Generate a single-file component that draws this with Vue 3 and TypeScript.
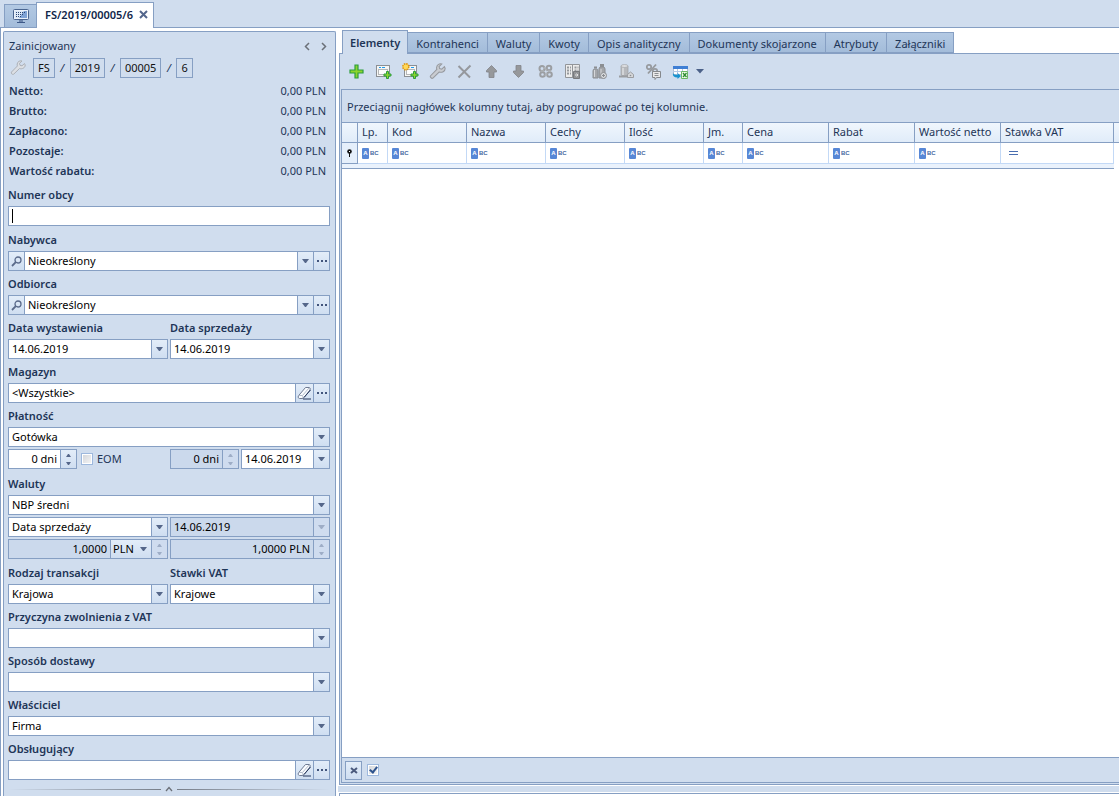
<script setup lang="ts">
import { ref } from 'vue'

interface Column { title: string; width: number; filter: 'abc' | 'eq' }

const totals = [
  { label: 'Netto:', value: '0,00 PLN' },
  { label: 'Brutto:', value: '0,00 PLN' },
  { label: 'Zapłacono:', value: '0,00 PLN' },
  { label: 'Pozostaje:', value: '0,00 PLN' },
  { label: 'Wartość rabatu:', value: '0,00 PLN' },
]

const tabs = ['Elementy', 'Kontrahenci', 'Waluty', 'Kwoty', 'Opis analityczny', 'Dokumenty skojarzone', 'Atrybuty', 'Załączniki']
const activeTab = ref('Elementy')

const columns: Column[] = [
  { title: 'Lp.', width: 30, filter: 'abc' },
  { title: 'Kod', width: 79, filter: 'abc' },
  { title: 'Nazwa', width: 79, filter: 'abc' },
  { title: 'Cechy', width: 79, filter: 'abc' },
  { title: 'Ilość', width: 79, filter: 'abc' },
  { title: 'Jm.', width: 39, filter: 'abc' },
  { title: 'Cena', width: 86, filter: 'abc' },
  { title: 'Rabat', width: 86, filter: 'abc' },
  { title: 'Wartość netto', width: 86, filter: 'abc' },
  { title: 'Stawka VAT', width: 113, filter: 'eq' },
]

const contractors = [
  { id: 'nabywca', label: 'Nabywca', value: 'Nieokreślony' },
  { id: 'odbiorca', label: 'Odbiorca', value: 'Nieokreślony' },
]

const singles = [
  { id: 'przyczyna', label: 'Przyczyna zwolnienia z VAT', value: '' },
  { id: 'dostawa', label: 'Sposób dostawy', value: '' },
  { id: 'wlasciciel', label: 'Właściciel', value: 'Firma' },
]

const issueDate = ref('14.06.2019')
const saleDate = ref('14.06.2019')
const dueDate = ref('14.06.2019')
const eom = ref(false)
const filterOn = ref(true)
</script>

<template>
  <div class="app">
    <nav class="doc-tabs">
      <button class="doc-tab home" type="button" aria-label="Pulpit">
        <svg width="16" height="15" viewBox="0 0 16 15">
          <rect x="0.5" y="0.5" width="15" height="10" rx="1" fill="#e9f1fb" stroke="#4a6590" />
          <rect x="2" y="2" width="12" height="7" fill="#7fa3d6" />
          <path d="M2 2h9L6 9H2z" fill="#dce9f8" />
          <path d="M3 3.500h9M3 5.500h7M3 7.500h5" stroke="#2c4675" stroke-width="1" stroke-dasharray="1 1" />
          <rect x="6" y="11" width="4" height="2" fill="#6d86ad" />
          <rect x="4" y="13" width="8" height="1" fill="#3c5888" />
        </svg>
      </button>
      <div class="doc-tab current">
        <span>FS/2019/00005/6</span>
        <button class="close" type="button" aria-label="Zamknij">
          <svg width="9" height="9" viewBox="0 0 9 9"><path d="M1 1l7 7M8 1L1 8" stroke="#53668c" stroke-width="2" /></svg>
        </button>
      </div>
    </nav>

    <div class="workspace">
      <aside class="side">
        <div class="status">
          <span>Zainicjowany</span>
          <span class="pager">
            <button type="button" aria-label="Poprzedni"><svg width="6" height="9" viewBox="0 0 6 9"><path d="M5 1L1.500 4.500L5 8" fill="none" stroke="#6b7078" stroke-width="1.500" /></svg></button>
            <button type="button" aria-label="Następny"><svg width="6" height="9" viewBox="0 0 6 9"><path d="M1 1l3.500 3.500L1 8" fill="none" stroke="#6b7078" stroke-width="1.500" /></svg></button>
          </span>
        </div>
        <div class="number">
          <button class="wrench" type="button" aria-label="Edytuj numer">
            <svg width="16" height="16" viewBox="0 0 16 16"><path d="M14.500 3.500l-2.500 2.300-2-.5-.5-2L12 1C10 .3 7.500 1.500 7.200 4c-.1.800 0 1.500.2 2L1.500 12c-.9 1 .9 3.200 2.200 2.200L9.500 8.500c2.500.9 5.800-.6 5.700-3.500z" fill="#dcdfe4" stroke="#acb0b7" /></svg>
          </button>
          <span class="part">FS</span><i>/</i>
          <span class="part">2019</span><i>/</i>
          <span class="part">00005</span><i>/</i>
          <span class="part">6</span>
        </div>
        <dl class="totals">
          <div v-for="t in totals" :key="t.label"><dt>{{ t.label }}</dt><dd>{{ t.value }}</dd></div>
        </dl>

        <form class="form" @submit.prevent>
          <div class="field first">
            <label for="obcy">Numer obcy</label>
            <div class="box"><input id="obcy" type="text" /><span class="caret"></span></div>
          </div>

          <div v-for="c in contractors" :key="c.id" class="field">
            <label :for="c.id">{{ c.label }}</label>
            <div class="box">
              <button class="cell left" type="button" aria-label="Szukaj">
                <svg width="11" height="11" viewBox="0 0 11 11"><circle cx="7" cy="4" r="3" fill="none" stroke="#5a6a8a" stroke-width="1.300" /><path d="M4.800 6.200L1 10" stroke="#5a6a8a" stroke-width="1.800" /></svg>
              </button>
              <select :id="c.id"><option>{{ c.value }}</option></select>
              <span class="cell"><i class="tri"></i></span>
              <button class="cell" type="button" aria-label="Więcej"><i class="dots"></i></button>
            </div>
          </div>

          <div class="pair">
            <div class="field">
              <label for="wyst">Data wystawienia</label>
              <div class="box"><input id="wyst" v-model="issueDate" type="text" /><button class="cell" type="button" aria-label="Kalendarz"><i class="tri"></i></button></div>
            </div>
            <div class="field">
              <label for="sprz">Data sprzedaży</label>
              <div class="box"><input id="sprz" v-model="saleDate" type="text" /><button class="cell" type="button" aria-label="Kalendarz"><i class="tri"></i></button></div>
            </div>
          </div>

          <div class="field">
            <label for="magazyn">Magazyn</label>
            <div class="box">
              <input id="magazyn" type="text" value="<Wszystkie>" />
              <button class="cell wide" type="button" aria-label="Wyczyść">
                <svg width="15" height="14" viewBox="0 0 15 14"><path d="M8.500 1.500h3.500q2 .5 1 2.500L7 11.500q-.7 1-2 1H2.500q-2-.5-1.200-2.500z" fill="#fafcff" stroke="#6f7b93" /><path d="M1.500 9.500h3.500q1.500.4 1 2.500M5.500 9.500L12 2" fill="none" stroke="#b4bdcc" /><path d="M7 11.500L13.500 4M6 13h8" stroke="#26375d" /></svg>
              </button>
              <button class="cell" type="button" aria-label="Więcej"><i class="dots"></i></button>
            </div>
          </div>

          <div class="field">
            <label for="platnosc">Płatność</label>
            <div class="box"><select id="platnosc"><option>Gotówka</option></select><span class="cell"><i class="tri"></i></span></div>
          </div>
          <div class="pair">
            <div class="inline">
              <div class="box days">
                <input class="num" type="text" value="0 dni" aria-label="Termin" />
                <button class="cell spin" type="button" aria-label="Zmień termin"><i></i><i></i></button>
              </div>
              <label class="check"><input v-model="eom" type="checkbox" /><span>EOM</span></label>
            </div>
            <div class="inline tight">
              <div class="box days off">
                <input class="num" type="text" value="0 dni" aria-label="Dni" disabled />
                <button class="cell spin" type="button" aria-label="Zmień dni" disabled><i></i><i></i></button>
              </div>
              <div class="box grow"><input v-model="dueDate" type="text" aria-label="Termin płatności" /><button class="cell" type="button" aria-label="Kalendarz"><i class="tri"></i></button></div>
            </div>
          </div>

          <div class="field spaced">
            <label for="waluty">Waluty</label>
            <div class="box"><select id="waluty"><option>NBP średni</option></select><span class="cell"><i class="tri"></i></span></div>
          </div>
          <div class="pair">
            <div class="box"><select aria-label="Rodzaj daty kursu"><option>Data sprzedaży</option></select><span class="cell"><i class="tri"></i></span></div>
            <div class="box off"><input type="text" value="14.06.2019" aria-label="Data kursu" disabled /><button class="cell" type="button" aria-label="Kalendarz" disabled><i class="tri"></i></button></div>
          </div>
          <div class="pair">
            <div class="box off">
              <input class="num" type="text" value="1,0000" aria-label="Kurs" disabled />
              <span class="currency"><select aria-label="Waluta"><option>PLN</option></select><i class="tri"></i></span>
              <button class="cell spin" type="button" aria-label="Zmień kurs" disabled><i></i><i></i></button>
            </div>
            <div class="box off">
              <input class="num" type="text" value="1,0000 PLN" aria-label="Wartość kursu" disabled />
              <button class="cell spin" type="button" aria-label="Zmień wartość" disabled><i></i><i></i></button>
            </div>
          </div>

          <div class="pair after">
            <div class="field">
              <label for="rodzaj">Rodzaj transakcji</label>
              <div class="box"><select id="rodzaj"><option>Krajowa</option></select><span class="cell"><i class="tri"></i></span></div>
            </div>
            <div class="field">
              <label for="stawki">Stawki VAT</label>
              <div class="box"><select id="stawki"><option>Krajowe</option></select><span class="cell"><i class="tri"></i></span></div>
            </div>
          </div>

          <div v-for="s in singles" :key="s.id" class="field">
            <label :for="s.id">{{ s.label }}</label>
            <div class="box"><select :id="s.id"><option>{{ s.value }}</option></select><span class="cell"><i class="tri"></i></span></div>
          </div>

          <div class="field">
            <label for="obslugujacy">Obsługujący</label>
            <div class="box">
              <input id="obslugujacy" type="text" />
              <button class="cell wide" type="button" aria-label="Wyczyść">
                <svg width="15" height="14" viewBox="0 0 15 14"><path d="M8.500 1.500h3.500q2 .5 1 2.500L7 11.500q-.7 1-2 1H2.500q-2-.5-1.200-2.500z" fill="#fafcff" stroke="#6f7b93" /><path d="M1.500 9.500h3.500q1.500.4 1 2.500M5.500 9.500L12 2" fill="none" stroke="#b4bdcc" /><path d="M7 11.500L13.500 4M6 13h8" stroke="#26375d" /></svg>
              </button>
              <button class="cell" type="button" aria-label="Więcej"><i class="dots"></i></button>
            </div>
          </div>
        </form>
        <button class="fold" type="button" aria-label="Zwiń">
          <i></i>
          <svg width="8" height="6" viewBox="0 0 8 6"><path d="M1 5l3-3.500L7 5" fill="none" stroke="#6b7078" stroke-width="1.300" /></svg>
          <i></i>
        </button>
      </aside>

      <main class="main">
        <div class="tabs" role="tablist">
          <button v-for="t in tabs" :key="t" type="button" role="tab" class="tab" :class="{ active: t === activeTab }" @click="activeTab = t">{{ t }}</button>
        </div>
        <section class="panel">
          <div class="toolbar">
            <button type="button" aria-label="Dodaj"><svg width="17" height="17" viewBox="0 0 17 17"><path d="M7 2h3v5h5v3h-5v5H7v-5H2V7h5z" fill="#8ed52c" stroke="#2d9d3c" stroke-width="1.200" /></svg></button>
            <button type="button" aria-label="Dodaj w oknie">
              <svg width="17" height="17" viewBox="0 0 17 17"><rect x="1.500" y="2.500" width="13" height="11" fill="#f6f6f4" stroke="#8b8f94" /><path d="M4 4.500h2M7 4.500h3" stroke="#1d9bf0" /><rect x="3.500" y="6.500" width="9" height="5" fill="#fdfdfd" stroke="#b5b7b8" /><path d="M11.500 8.500h2v2.500H16v2h-2.500v2.500h-2V13H9v-2h2.500z" fill="#8ed52c" stroke="#2d9d3c" /></svg>
            </button>
            <button type="button" aria-label="Nowy element">
              <svg width="17" height="17" viewBox="0 0 17 17"><rect x="2.500" y="2.500" width="12" height="11" fill="#f6f6f4" stroke="#8b8f94" /><path d="M9 4.500h3" stroke="#1d9bf0" /><rect x="4.500" y="6.500" width="8" height="5" fill="#fdfdfd" stroke="#b5b7b8" /><circle cx="3.800" cy="3.800" r="3" fill="#ffd95a" stroke="#dc930d" stroke-width="1.500" stroke-dasharray="1.500 0.860" /><path d="M11.500 8.500h2v2.500H16v2h-2.500v2.500h-2V13H9v-2h2.500z" fill="#8ed52c" stroke="#2d9d3c" /></svg>
            </button>
            <button type="button" aria-label="Edytuj"><svg width="17" height="17" viewBox="0 0 16 16"><path d="M14.500 3.500l-2.500 2.300-2-.5-.5-2L12 1C10 .3 7.500 1.500 7.200 4c-.1.800 0 1.500.2 2L1.500 12c-.9 1 .9 3.200 2.200 2.200L9.500 8.500c2.500.9 5.800-.6 5.700-3.500z" fill="#c9ccd1" stroke="#96999e" /></svg></button>
            <button type="button" aria-label="Usuń"><svg width="17" height="17" viewBox="0 0 17 17"><path d="M2.500 3L14 14.500M14.500 2.500L2.500 14.500" stroke="#95989d" stroke-width="2" /></svg></button>
            <button type="button" aria-label="W górę"><svg width="17" height="17" viewBox="0 0 17 17"><path d="M8.500 2.500l5 5v1.500H11v5.500H6V9H3.500V7.500z" fill="#96989b" stroke="#818388" stroke-width="0.800" /></svg></button>
            <button type="button" aria-label="W dół"><svg width="17" height="17" viewBox="0 0 17 17"><path d="M8.500 14.500l5-5V8H11V2.500H6V8H3.500v1.500z" fill="#96989b" stroke="#818388" stroke-width="0.800" /></svg></button>
            <button type="button" aria-label="Powiąż">
              <svg width="17" height="17" viewBox="0 0 17 17" fill="none" stroke="#9b9ea2" stroke-width="2"><circle cx="5" cy="5.500" r="2.500" /><circle cx="12" cy="5" r="2.300" /><circle cx="5.500" cy="11.500" r="2.300" /><circle cx="12.500" cy="11.500" r="2.300" /><path d="M7 4l3 4M4 8h3M10 10l-2 3M11 8h3" stroke="#afb2b6" stroke-width="1.500" /></svg>
            </button>
            <button type="button" aria-label="Cennik">
              <svg width="17" height="17" viewBox="0 0 17 17"><path d="M1.500 1.500h14v13h-14z" fill="#ececec" stroke="#929599" /><path d="M8 2h1v12H8z" fill="#929599" /><path d="M3 4.500h4M3 7.500h4M3 10.500h4M10.500 4.500h4M10.500 7.500h4" stroke="#96999d" stroke-width="2" stroke-dasharray="2 1" /><path d="M9.500 8.500h6v7h-6z" fill="#929497" stroke="#77797d" /><path d="M11 12h2.500M12.500 10.500L14 12l-1.500 1.500" fill="none" stroke="#e0e0e0" /></svg>
            </button>
            <button type="button" aria-label="Zestaw">
              <svg width="17" height="17" viewBox="0 0 17 17"><path d="M2 8q0-2 1.500-2h2Q7 6 7 8v7H2zM8 6q0-2 2-2h2q2 0 2 2v9H8z" fill="#a4a6aa" stroke="#8b8e92" /><path d="M3 3.500h3v2H3zM9 1h4v3H9z" fill="#8b8e92" /><path d="M3.500 7v7M10 6v8" stroke="#d5d7da" /><circle cx="12.500" cy="12.500" r="3" fill="#d9dbde" stroke="#8b8e92" /><path d="M12.500 11v3M11 12.500h3" stroke="#8b8e92" /></svg>
            </button>
            <button type="button" aria-label="Zasoby">
              <svg width="17" height="17" viewBox="0 0 17 17"><path d="M3 3v9q3.500 2 7 0V3z" fill="#b7b9bd" stroke="#9b9da1" stroke-width="0.700" /><path d="M5 4v8" stroke="#d3d5d8" stroke-width="2" /><ellipse cx="6.500" cy="3" rx="3.500" ry="1.500" fill="#dcdde0" stroke="#a4a6aa" stroke-width="0.700" /><path d="M1 13.500h11" stroke="#9b9da1" stroke-width="2" /><path d="M9.500 14.500v-3l3-2.500 3 2.500v3z" fill="#d5d7da" stroke="#9b9da1" /><circle cx="12.500" cy="12.500" r="0.800" fill="#8b8e92" /></svg>
            </button>
            <button type="button" aria-label="Rabat">
              <svg width="17" height="17" viewBox="0 0 17 17"><circle cx="4" cy="4" r="2.200" fill="none" stroke="#96999d" stroke-width="1.700" /><circle cx="10" cy="8" r="2.200" fill="none" stroke="#96999d" stroke-width="1.700" /><path d="M11 1.500L3 10.500" stroke="#96999d" stroke-width="1.800" /><path d="M7.500 8.500h8v6h-4l-1.500 2v-2H7.500z" fill="#e9e9ea" stroke="#85888c" /><path d="M9.500 10.500h4M9.500 12.500h4" stroke="#8b8e92" /></svg>
            </button>
            <button type="button" aria-label="Eksport">
              <svg width="17" height="17" viewBox="0 0 17 17"><path d="M1.500 3.500h14v8h-14z" fill="#fff" stroke="#b1bdd2" /><path d="M1 3h15v3H1z" fill="#3f7fd4" /><path d="M5.500 6v6M10.500 6v6M1 8.500h15" stroke="#b4c7e4" /><path d="M1 9.500q0 2.500 4.500 2.500V10L9 13l-3.500 3v-1.500Q0 14.500 1 9.500z" fill="#1a93cf" /><path d="M9.500 8.500h6v7h-6z" fill="#effbe9" stroke="#6ab766" /><path d="M11 10l3.500 4M14.500 10L11 14" stroke="#2c8b31" stroke-width="1.300" /></svg>
            </button>
            <button type="button" class="more" aria-label="Więcej opcji"><svg width="8" height="5" viewBox="0 0 8 5"><path d="M0 0h8L4 4.500z" fill="#4b6189" /></svg></button>
          </div>

          <div class="grid">
            <div class="group-hint">Przeciągnij nagłówek kolumny tutaj, aby pogrupować po tej kolumnie.</div>
            <table class="table">
              <colgroup>
                <col class="marker-col" />
                <col v-for="c in columns" :key="c.title" :style="{ width: c.width + 'px' }" />
                <col />
              </colgroup>
              <thead>
                <tr><th></th><th v-for="c in columns" :key="c.title" scope="col">{{ c.title }}</th><th></th></tr>
              </thead>
              <tbody>
                <tr class="filters">
                  <td class="marker"><svg width="7" height="8" viewBox="0 0 7 8"><circle cx="3.500" cy="2.500" r="2.300" fill="#111" /><rect x="3" y="2" width="1" height="1" fill="#fff" /><path d="M3.500 4v4" stroke="#111" /></svg></td>
                  <td v-for="c in columns" :key="c.title">
                    <span v-if="c.filter === 'abc'" class="abc"><b>A</b><span>BC</span></span>
                    <i v-else class="equals"></i>
                  </td>
                  <td class="rest"></td>
                </tr>
                <tr class="sheet"><td colspan="11"></td><td class="rest"></td></tr>
              </tbody>
            </table>
            <div class="empty"></div>
            <footer class="foot">
              <button type="button" aria-label="Usuń filtr"><svg width="8" height="7" viewBox="0 0 8 7"><path d="M1 1l6 5M7 1L1 6" stroke="#4b5a7d" stroke-width="2" /></svg></button>
              <label class="check"><input v-model="filterOn" type="checkbox" aria-label="Filtr aktywny" /></label>
            </footer>
          </div>
        </section>
        <div class="splitter"></div>
        <div class="lower"></div>
      </main>
    </div>
  </div>
</template>

<style>
html, body { margin: 0; overflow: hidden; }
</style>

<style scoped>
.app {
  --bg: #d0ddee;
  --line: #869fc3;
  --ink: #1e3557;
  display: flex;
  flex-direction: column;
  height: 100vh;
  background: var(--bg);
  color: var(--ink);
  font: 11px/16px "Noto Sans", "Open Sans", sans-serif;
}
.app * { box-sizing: border-box; }
button, input, select { font: inherit; color: inherit; margin: 0; padding: 0; border: 0; background: none; border-radius: 0; outline: 0; }
button { display: flex; align-items: center; justify-content: center; }
svg { display: block; flex: none; }

.doc-tabs { display: flex; align-items: flex-end; flex: none; height: 28px; padding-left: 4px; border-bottom: 1px solid var(--line); }
.doc-tab { border: 1px solid var(--line); border-bottom: 0; }
.home { width: 33px; height: 23px; background: linear-gradient(#b3c9e3, #a3bcda); }
.current { display: flex; align-items: center; gap: 6px; height: 26px; margin: 0 0 -1px -1px; padding: 0 5px 2px 8px; background: #fff; color: #10264a; font-weight: 600; }

.workspace { display: flex; flex: 1; min-height: 0; background: #fff; border-left: 1px solid var(--line); padding: 3px 0 0 2px; }
.side { flex: none; width: 333px; border: 1px solid var(--line); border-bottom: 0; border-radius: 2px 2px 0 0; background: var(--bg); padding: 4px 5px 0 4px; overflow: hidden; }
.status { display: flex; justify-content: space-between; align-items: center; height: 20px; padding-left: 1px; }
.pager { display: flex; gap: 11px; padding-right: 3px; }
.number { display: flex; align-items: center; height: 24px; }
.wrench { width: 20px; height: 20px; margin-right: 5px; }
.part { border: 1px solid var(--line); height: 20px; line-height: 18px; padding: 0 4px; color: #111; }
.number i { width: 15px; text-align: center; }
.totals { margin: 0; padding: 1px 4px 0 1px; }
.totals div { display: flex; justify-content: space-between; height: 20px; line-height: 20px; }
.totals dt { font-weight: 600; }
.totals dd { margin: 0; }

.form { display: flex; flex-direction: column; gap: 2px; padding-top: 3px; }
.field > label { display: block; height: 22px; line-height: 22px; font-weight: 600; }
.first { margin-bottom: 1px; }
.spaced { margin-top: 2px; }
.after { margin-top: 1px; }
.pair { display: grid; grid-template-columns: 1fr 1fr; gap: 2px; }
.box { position: relative; display: flex; height: 20px; border: 1px solid var(--line); background: #fff; color: #000; }
.box input, .box > select { flex: 1; width: 0; min-width: 0; height: 18px; padding: 0 3px; appearance: none; }
.box input { padding-bottom: 2px; }
.box .num { text-align: right; }
.caret { position: absolute; left: 3px; top: 2px; width: 1px; height: 14px; background: #000; }
.cell { display: flex; align-items: center; justify-content: center; flex: none; width: 16px; border-left: 1px solid var(--line); background: linear-gradient(#e3edf9, #cfdef1); }
.cell.wide { width: 18px; }
.cell.left { border-left: 0; border-right: 1px solid var(--line); }
.tri { width: 7px; border: solid transparent; border-width: 4px 3px 0; border-top-color: #55678a; }
.dots { width: 2px; height: 2px; background: #42557c; box-shadow: -4px 0 #42557c, 4px 0 #42557c; }
.spin { flex-direction: column; gap: 5px; }
.spin i { width: 5px; border: solid transparent; border-width: 0 2px 3px; border-bottom-color: #55678a; }
.spin i + i { border-width: 3px 2px 0; border-top-color: #55678a; }
.off { background: #cbd9ec; }
.off > .cell { background: #cfdcef; }
.off > .cell i { opacity: .4; }
.box input:disabled { color: #000; opacity: 1; }
.currency { display: flex; align-items: center; width: 41px; padding-right: 4px; border-left: 1px solid var(--line); background: linear-gradient(#e3edf9, #cfdef1); }
.currency select { flex: 1; width: 0; padding-left: 2px; appearance: none; }
.inline { display: flex; align-items: center; gap: 4px; }
.tight { gap: 2px; }
.days { width: 69px; }
.grow { flex: 1; }
.check { display: flex; align-items: center; gap: 4px; }
.check input { position: relative; width: 12px; height: 12px; appearance: none; border: 1px solid #9db8dd; background: linear-gradient(135deg, #d0d3d8, #f7f7f7); box-shadow: inset 0 0 0 1px #fff; }
.check input:checked::after { content: ""; position: absolute; left: 3px; top: 0; width: 5px; height: 8px; border: solid #2f548d; border-width: 0 2px 2px 0; box-sizing: border-box; transform: rotate(38deg); }
.fold { width: 100%; height: 12px; margin-top: 3px; gap: 4px; }
.fold i { flex: 1; height: 1px; background: linear-gradient(90deg, var(--bg), #777e89); }
.fold i:last-child { background: linear-gradient(270deg, var(--bg), #777e89); }

.main { display: flex; flex-direction: column; flex: 1; min-width: 0; padding-left: 2px; }
.tabs { position: relative; z-index: 1; display: flex; align-items: flex-end; height: 22px; margin: 0 0 0 4px; }
.tab { height: 21px; margin-right: -1px; padding: 2px 8px 0; border: 1px solid var(--line); background: linear-gradient(#b3c9e3, #a3bcda); white-space: nowrap; }
.tab.active { height: 24px; margin-bottom: -1px; padding: 0 7px; background: var(--bg); border-bottom: 0; font-weight: 600; }
.panel { display: flex; flex-direction: column; flex: 1; min-height: 0; margin-left: 1px; border: 1px solid var(--line); border-right: 0; background: var(--bg); padding: 0 0 1px 1px; }
.toolbar { display: flex; align-items: center; flex: none; height: 35px; padding-left: 2px; }
.toolbar button { width: 27px; height: 27px; }
.toolbar .more { width: 12px; }
.grid { display: flex; flex-direction: column; flex: 1; min-height: 0; border: 1px solid var(--line); border-right: 0; }
.group-hint { flex: none; height: 32px; line-height: 34px; padding-left: 5px; white-space: nowrap; overflow: hidden; }
.table { width: 100%; table-layout: fixed; border-collapse: separate; border-spacing: 0; background: #fff; }
.marker-col { width: 16px; }
th { height: 21px; padding: 0 0 2px 4px; border: solid var(--line); border-width: 1px 1px 1px 0; background: linear-gradient(#f0f6fd, #e0ecf9); font-weight: 400; text-align: left; white-space: nowrap; overflow: hidden; }
th:last-child { border-right: 0; }
.filters td { height: 21px; padding: 0 0 0 4px; border-right: 1px solid #c3d9f6; border-bottom: 1px solid #c3d9f6; }
.filters .marker { padding-left: 4px; background: #e5effb; border-color: var(--line); }
.sheet td { height: 5px; padding: 0; background: #eaf2fc; border-bottom: 1px solid var(--line); }
.filters .rest, .sheet .rest { background: #fff; border: 0; }
.abc { display: flex; align-items: center; gap: 1px; font: 700 6px/11px "Liberation Sans", sans-serif; color: #44689f; }
.abc b { width: 7px; height: 11px; background: #5787d6; color: #fff; text-align: center; border-radius: 1px; }
.equals { display: block; width: 9px; height: 4px; margin-left: 4px; border: solid #4a6eb0; border-width: 1px 0; }
.empty { flex: 1; background: #fff; }
.foot { display: flex; align-items: center; gap: 5px; flex: none; height: 25px; padding-left: 3px; border-top: 1px solid var(--line); }
.foot button { width: 17px; height: 19px; border: 1px solid var(--line); background: linear-gradient(#e3edf9, #cfdef1); }
.splitter { flex: none; height: 6px; margin-top: 1px; background: var(--bg); }
.lower { flex: none; height: 3px; margin: 1px 0 0 1px; border: solid var(--line); border-width: 1px 0 0 1px; }
</style>
